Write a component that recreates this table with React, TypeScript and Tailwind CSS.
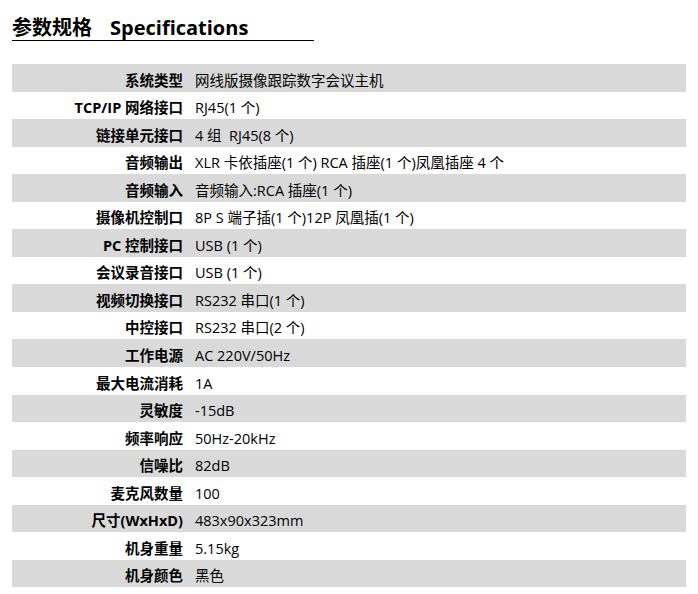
import React from "react";

const rows: [string, string][] = [
  ["系统类型", "网线版摄像跟踪数字会议主机"],
  ["TCP/IP 网络接口", "RJ45(1 个)"],
  ["链接单元接口", "4 组  RJ45(8 个)"],
  ["音频输出", "XLR 卡依插座(1 个) RCA 插座(1 个)凤凰插座 4 个"],
  ["音频输入", "音频输入:RCA 插座(1 个)"],
  ["摄像机控制口", "8P S 端子插(1 个)12P 凤凰插(1 个)"],
  ["PC 控制接口", "USB (1 个)"],
  ["会议录音接口", "USB (1 个)"],
  ["视频切换接口", "RS232 串口(1 个)"],
  ["中控接口", "RS232 串口(2 个)"],
  ["工作电源", "AC 220V/50Hz"],
  ["最大电流消耗", "1A"],
  ["灵敏度", "-15dB"],
  ["频率响应", "50Hz-20kHz"],
  ["信噪比", "82dB"],
  ["麦克风数量", "100"],
  ["尺寸(WxHxD)", "483x90x323mm"],
  ["机身重量", "5.15kg"],
  ["机身颜色", "黑色"],
];

export default function App() {
  return (
    <div
      className="w-[698px] h-[594px] bg-white text-black overflow-hidden"
      style={{ fontFamily: '"Open Sans", "Noto Sans CJK SC", sans-serif' }}
    >
      <div className="pt-[15px] pl-3">
        <div className="flex w-[302px] border-b border-black text-[20px] font-bold leading-[25px] whitespace-pre">
          <span>参数规格</span>
          <span className="ml-[18px]">Specifications</span>
        </div>
      </div>
      <div className="mt-[23px] ml-3 w-[674px]">
        {rows.map(([k, v], i) => (
          <div
            key={k}
            className={`flex items-center h-[27.56px] text-[14.5px] leading-none ${
              i % 2 === 0 ? "bg-[#d9d9d9]" : "bg-white"
            }`}
          >
            <div className="w-[171px] text-right font-bold pt-[6px] whitespace-pre">{k}</div>
            <div className="pl-[12px] pt-[6px] whitespace-pre">{v}</div>
          </div>
        ))}
      </div>
    </div>
  );
}
